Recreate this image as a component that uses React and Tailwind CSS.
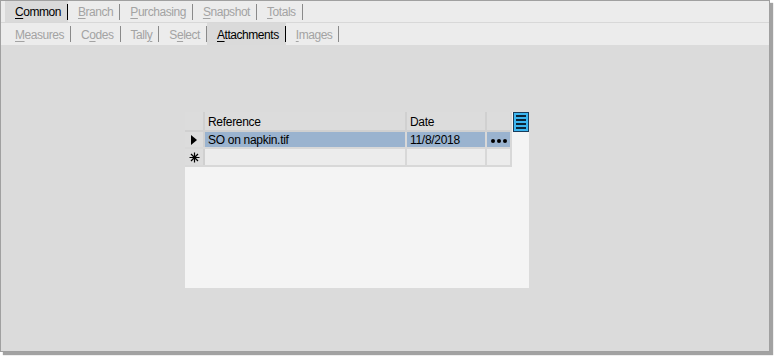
import React from 'react';

const font = { fontFamily: '"Liberation Sans", Arial, sans-serif' };

function Tab({ label, k, active }) {
  const i = label.indexOf(k);
  return (
    <div className={`flex items-center h-full ${active ? "bg-[#dadada] text-black" : "text-[#a3a3a3]"}`}>
      <span className="pl-[10px] pr-[6px] text-[12px] tracking-[-0.45px] leading-none pt-[1px]">
        {label.slice(0, i)}<span className="underline underline-offset-2">{k}</span>{label.slice(i + 1)}
      </span>
      <span className={`w-px h-[16px] ${active ? "bg-black" : "bg-[#8a8a8a]"}`} />
    </div>
  );
}

const top = [
  { label: "Common", k: "C", active: true },
  { label: "Branch", k: "B" },
  { label: "Purchasing", k: "P" },
  { label: "Snapshot", k: "S" },
  { label: "Totals", k: "T" },
];
const sub = [
  { label: "Measures", k: "M" },
  { label: "Codes", k: "o" },
  { label: "Tally", k: "y" },
  { label: "Select", k: "e" },
  { label: "Attachments", k: "A", active: true },
  { label: "Images", k: "I" },
];

export default function App() {
  return (
    <div className="w-[777px] h-[359px] bg-white" style={font}>
      <div className="w-[770px] h-[352px] border border-[#a0a0a0] bg-[#dbdbdb] shadow-[3px_3px_1px_#a2a2a2] flex flex-col">
        <div className="h-[22px] bg-[#ececec] flex pl-[4px] border-b border-[#d8d8d8]">
          {top.map(t => <Tab key={t.label} {...t} />)}
        </div>
        <div className="h-[22px] bg-[#ececec] flex pl-[4px]">
          {sub.map(t => <Tab key={t.label} {...t} />)}
        </div>
        <div className="flex-1 pl-[184px] pt-[67px]">
          <div className="w-[344px] h-[176px] bg-[#f4f4f4] flex items-start">
            <div className="w-[327px] border-r-2 border-b-2 border-[#d8d8d8] text-[12px] tracking-[-0.3px] leading-none">
              <div className="flex h-[20px] bg-[#dcdcdc] border-b-2 border-[#d0d0d0]">
                <div className="w-[20px] border-r-2 border-[#d0d0d0]" />
                <div className="w-[202px] border-r-2 border-[#d0d0d0] flex items-center pl-[3px] pt-[2px] text-black">Reference</div>
                <div className="w-[80px] border-r-2 border-[#d0d0d0] flex items-center pl-[3px] pt-[2px] text-black">Date</div>
                <div className="flex-1" />
              </div>
              <div className="flex h-[17px] border-b-2 border-[#d8d8d8]">
                <div className="w-[20px] bg-[#dcdcdc] border-r-2 border-[#d0d0d0] flex items-center justify-center">
                  <svg width="6" height="10" viewBox="0 0 6 10"><path d="M0 0 L6 5 L0 10 Z" fill="#000" /></svg>
                </div>
                <div className="w-[202px] bg-[#9ab3cf] border-r-2 border-[#d8d8d8] flex items-center pl-[3px] pt-[1px] text-black">SO on napkin.tif</div>
                <div className="w-[80px] bg-[#9ab3cf] border-r-2 border-[#d8d8d8] flex items-center pl-[3px] pt-[1px] text-black">11/8/2018</div>
                <div className="flex-1 bg-[#9ab3cf] flex items-center justify-center gap-[2px] pt-[2px]">
                  <span className="w-[4px] h-[4px] rounded-full bg-black" />
                  <span className="w-[4px] h-[4px] rounded-full bg-black" />
                  <span className="w-[4px] h-[4px] rounded-full bg-black" />
                </div>
              </div>
              <div className="flex h-[16px] bg-[#ececec]">
                <div className="w-[20px] bg-[#dcdcdc] border-r-2 border-[#d0d0d0] flex items-center justify-center">
                  <svg width="11" height="11" viewBox="0 0 11 11" stroke="#000" strokeWidth="1.2"><path d="M5.5 0.5V10.5M0.5 5.5H10.5M2 2L9 9M9 2L2 9" /></svg>
                </div>
                <div className="w-[202px] border-r-2 border-[#d8d8d8]" />
                <div className="w-[80px] border-r-2 border-[#d8d8d8]" />
                <div className="flex-1" />
              </div>
            </div>
            <div className="ml-px w-[16px] h-[20px] bg-[#3cb5ef] border border-[#1a3c5a] flex flex-col justify-center gap-[2px] px-[2px]">
              <span className="h-[2px] bg-[#0d2436]" />
              <span className="h-[2px] bg-[#0d2436]" />
              <span className="h-[2px] bg-[#0d2436]" />
              <span className="h-[2px] bg-[#0d2436]" />
            </div>
          </div>
        </div>
      </div>
    </div>
  );
}
